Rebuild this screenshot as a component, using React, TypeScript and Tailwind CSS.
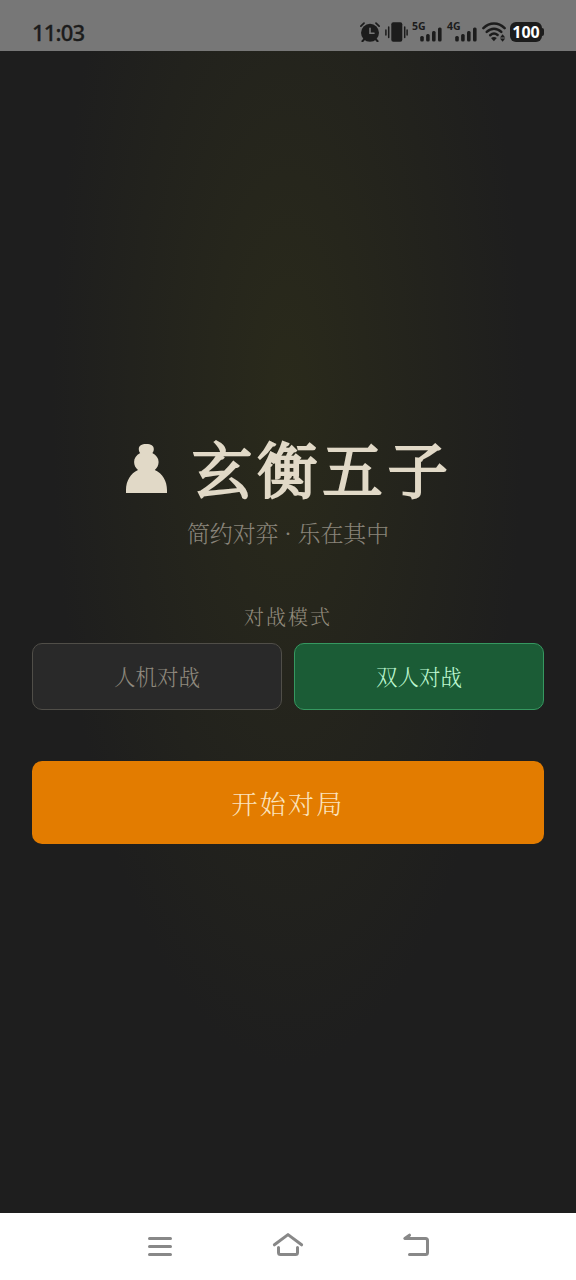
import { useState } from 'react'
import { clsx } from 'clsx'

const modes = [
  { id: 'ai', label: '人机对战' },
  { id: 'pvp', label: '双人对战' },
]

function AlarmIcon() {
  return (
    <svg className="w-5 h-5" viewBox="0 0 20 20" fill="none" stroke="#1c1c1c" strokeLinecap="round">
      <circle cx="10" cy="10.8" r="9" fill="#1c1c1c" stroke="none" />
      <path d="M0.9 4.2L4 1.2M19.1 4.2L16 1.2" strokeWidth="1.7" />
      <path d="M4 17.5L2.4 19.2M16 17.5L17.6 19.2" strokeWidth="2" />
      <path d="M10 6.2V11.3H14" stroke="#777" strokeWidth="1.6" />
    </svg>
  )
}

function VibrateIcon() {
  return (
    <svg className="w-[23px] h-5" viewBox="0 0 23 20" fill="#1c1c1c">
      <rect x="6.3" y="0.3" width="11" height="19.4" rx="2" />
      <path d="M0.9 8V13M3.7 5V15.5M19.7 5V15.5M22.1 8V13" stroke="#1c1c1c" strokeWidth="1.5" strokeLinecap="round" />
    </svg>
  )
}

function Signal({ label }: { label: string }) {
  return (
    <div className="relative w-[29px] h-5">
      <span className="absolute -left-px -top-[2px] text-[10.5px] leading-[12px] font-bold">{label}</span>
      <svg className="absolute right-0 bottom-0 w-[22px] h-[15px]" viewBox="0 0 22 15" fill="#1c1c1c">
        <rect x="0.2" y="9" width="3.6" height="5.6" rx="1.5" />
        <rect x="6.1" y="7" width="3.6" height="7.6" rx="1.5" />
        <rect x="12" y="4" width="3.6" height="10.6" rx="1.5" />
        <rect x="18" y="0.6" width="3.6" height="14" rx="1.5" />
      </svg>
    </div>
  )
}

function WifiIcon() {
  return (
    <svg className="w-6 h-5" viewBox="0 0 24 20" fill="none" stroke="#1c1c1c" strokeWidth="2.5" strokeLinecap="round">
      <path d="M1.4 6.2C7.6 -0.1 16.4 -0.1 22.6 6.2" />
      <path d="M4.7 9.9C9.1 5.6 14.9 5.6 19.3 9.9" />
      <path d="M8.2 13.2C10.6 11.1 13.4 11.1 15.6 13" />
      <path d="M9 15.9C11 14.6 13 14.6 14.8 15.9L11.9 19.3Z" fill="#1c1c1c" stroke="none" />
      <path d="M18 15.4L20.6 12.2L23.2 15.4ZM18 16.5L20.6 19.7L23.2 16.5Z" fill="#1c1c1c" stroke="none" />
    </svg>
  )
}

function StatusBar() {
  return (
    <header className="h-[51px] shrink-0 bg-[#777] text-[#1c1c1c] flex items-start justify-between pl-8 pr-[34px] pt-[22px] font-['Noto_Sans','Open_Sans',sans-serif]">
      <span className="-mt-px text-[22px] leading-[22px] font-medium tracking-[-0.8px] [-webkit-text-stroke:0.3px_#1c1c1c]">11:03</span>
      <div className="flex items-center">
        <AlarmIcon />
        <div className="ml-[5px]"><VibrateIcon /></div>
        <div className="ml-[5px]"><Signal label="5G" /></div>
        <div className="ml-[6px]"><Signal label="4G" /></div>
        <div className="ml-[5px]"><WifiIcon /></div>
        <div className="relative ml-[4px] w-8 h-5 rounded-[6px] bg-[#1c1c1c] text-white text-[16px] leading-5 font-bold text-center">
          100
          <span className="absolute -right-[2px] top-[6px] w-[2px] h-2 rounded-r bg-[#1c1c1c]" />
        </div>
      </div>
    </header>
  )
}

function Pawn() {
  return (
    <svg className="w-[41px] h-[49px]" viewBox="0 0 41 49" fill="#e1d9c7">
      <path d="M20.3 0C25 0 27.8 1.9 27.8 4.9C27.8 6.7 27.3 8 26.3 8.9C30.4 11 32.6 14.2 32.6 18C32.6 21.3 31.2 24 28.8 26C36.6 29.5 41 37 41 46V49H0V46C0 37 4.4 29.5 12 26C9.5 24 8.1 21.3 8.1 18C8.1 14.2 10.2 11 14.2 8.9C13.2 8 12.8 6.7 12.8 4.9C12.8 1.9 15.6 0 20.3 0Z" />
    </svg>
  )
}

function NavBar() {
  return (
    <nav className="h-[67px] shrink-0 bg-white flex justify-center gap-[96px] pt-4">
      <svg className="w-8 h-8" viewBox="0 0 32 32" fill="none" stroke="#888" strokeWidth="3" strokeLinecap="round">
        <path d="M5.5 9.5H26.5M5.5 17.5H26.5M5.5 25.5H26.5" />
      </svg>
      <svg className="w-8 h-8" viewBox="0 0 32 32" fill="none" stroke="#888" strokeWidth="3" strokeLinecap="round" strokeLinejoin="round">
        <path d="M2.4 15.8L16 5.6L29.6 15.8" />
        <path d="M6.5 18.6V23.5Q6.5 25.5 8.5 25.5H23.5Q25.5 25.5 25.5 23.5V18.6" />
      </svg>
      <svg className="w-8 h-8" viewBox="0 0 32 32" fill="none" stroke="#888" strokeWidth="3" strokeLinecap="round" strokeLinejoin="round">
        <path d="M9.5 6.2L4.8 9.5H25.5Q27.5 9.5 27.5 11.5V23.5Q27.5 25.5 25.5 25.5H9.5" />
      </svg>
    </nav>
  )
}

export default function App() {
  const [mode, setMode] = useState('pvp')

  return (
    <div className="w-full h-screen flex flex-col bg-[#1e1e1e] overflow-hidden">
      <StatusBar />

      <main className="flex-1 px-8 flex flex-col items-center bg-[radial-gradient(ellipse_at_50%_30%,#2a2a1b_0%,#1e1e1e_58%)] font-['Noto_Serif_CJK_SC','Noto_Serif_SC','Liberation_Serif','Noto_Sans_CJK_SC',serif] font-light">
        {/* Title */}
        <h1 className="mt-[374px] ml-[3px] h-[86px] flex items-center text-[#e1d9c7]">
          <Pawn />
          <span className="-mt-[2px] ml-[25px] text-[60px] leading-[86px] font-light tracking-[5.2px] whitespace-nowrap [-webkit-text-stroke:2.6px_#e1d9c7]">玄衡五子</span>
        </h1>
        <p className="mt-[6px] text-[23px] leading-[32px] tracking-[-0.1px] text-[#89847a]">简约对弈 · 乐在其中</p>

        {/* Mode */}
        <p className="mt-[54px] text-[20px] leading-[28px] tracking-[2px] text-[#928b7c]">对战模式</p>
        <div className="mt-[12px] w-full grid grid-cols-2 gap-3">
          {modes.map((item) => (
            <button
              key={item.id}
              onClick={() => setMode(item.id)}
              className={clsx(
                'h-[67px] rounded-[10px] border text-[21.5px]',
                mode === item.id
                  ? 'bg-[#1b5c36] border-[#369860] text-[#bbf7d0]'
                  : 'bg-[#292929] border-[#504e48] text-[#8f897e]'
              )}
            >
              {item.label}
            </button>
          ))}
        </div>

        <button className="mt-[51px] w-full h-[83px] rounded-[10px] bg-[#e37c00] text-[#fbe3bd] text-[26px] tracking-[2.2px]">
          开始对局
        </button>
      </main>

      <NavBar />
    </div>
  )
}
